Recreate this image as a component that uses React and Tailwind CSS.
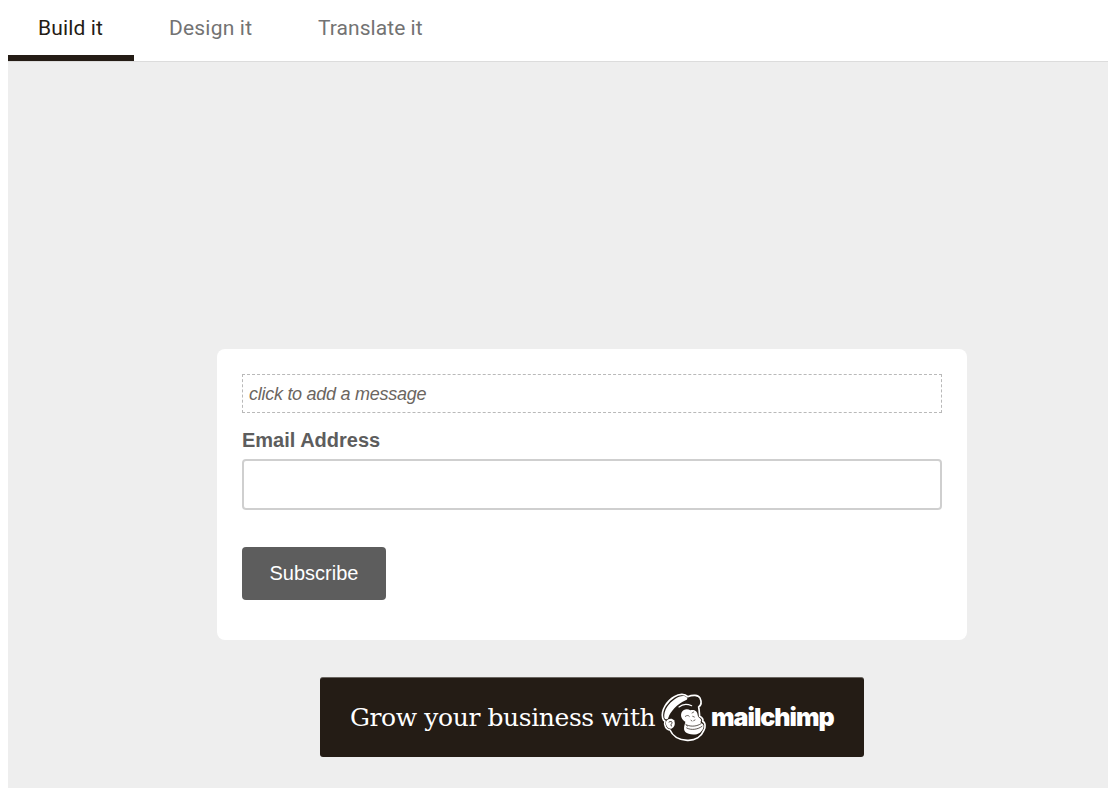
function ChimpLogo() {
  return (
    <svg className="ml-[5px] h-[51px] w-[47px] shrink-0" viewBox="0 0 141 153" fill="none" strokeLinecap="round" strokeLinejoin="round">
      <path
        d="M8 78C2 54 22 26 43 14C57 6 74 4 83 14C98 8 115 8 120 18C125 29 123 40 116 45C118 55 118 64 119 73C127 77 131 83 128 88C136 90 138 106 131 116C124 134 106 146 82 145C56 144 37 131 30 114C18 113 11 99 15 87C11 86 9 83 8 78Z"
        stroke="#fff"
        strokeWidth="5"
      />
      <path d="M13 77C10 55 27 33 45 21C57 12 73 9 80 16C84 20 82 23 77 25C62 32 52 39 43 49C34 59 28 68 25 77C23 84 15 83 13 77Z" fill="#fff" />
      <path d="M57 45C67 36 79 34 95 41" stroke="#fff" strokeWidth="3.5" />
      <path d="M19 87C25 79 37 78 42 85C47 94 44 107 34 110C21 111 15 97 19 87Z" fill="#fff" />
      <path d="M27 90C33 86 39 90 35 95L33 98L34 102" stroke="#241c15" strokeWidth="2.6" />
      <path
        d="M65 61C70 51 83 50 91 55C101 51 113 57 113 69C114 77 124 80 124 85C119 92 124 93 129 97C134 104 128 116 120 122C107 131 84 128 76 120C68 110 75 96 76 89C66 85 60 72 65 61Z"
        fill="#fff"
      />
      <path d="M76 73C81 69 86 70 88 73M98 73L103 75M96 63L101 60M93 85L96 87M101 86L105 84" stroke="#241c15" strokeWidth="2" />
      <path d="M80 99C94 105 112 103 123 95M80 108C94 116 115 112 126 103M77 97L82 102" stroke="#241c15" strokeWidth="2.2" />
    </svg>
  );
}

export default function App() {
  return (
    <div className="flex h-[788px] w-[1108px] flex-col overflow-hidden bg-white pl-2">
      <nav className="flex h-[62px] shrink-0 border-b border-[#dcdcdc] font-['Roboto',sans-serif] text-[21px] leading-[57px] whitespace-nowrap">
        <button className="h-[61px] w-[126px] border-b-6 border-[#241c15] pb-0 pl-[30px] text-left tracking-[0.15px] text-[#241c15]">Build it</button>
        <button className="h-[61px] w-[149px] border-b-6 border-transparent pl-[35px] text-left tracking-[0.2px] text-[#737373]">Design it</button>
        <button className="h-[61px] border-b-6 border-transparent pl-[35px] text-left tracking-[0.05px] text-[#737373]">Translate it</button>
      </nav>

      <main className="flex flex-1 flex-col bg-[#eeeeee] pt-[287px] pl-[209px] font-['Liberation_Sans',sans-serif]">
        <form className="h-[291px] w-[750px] shrink-0 rounded-lg bg-white px-[25px] pt-[25px]">
          <div className="flex h-[39px] items-center border border-dashed border-[#b9b9b9] pt-px pl-[6px] text-[18px] tracking-[-0.27px] text-[#6b6560] italic">
            click to add a message
          </div>
          <label htmlFor="email" className="mt-[14px] block text-[20px] leading-[26px] font-bold text-[#5d5d5d]">Email Address</label>
          <input id="email" type="email" className="mt-[6px] block h-[51px] w-full rounded-[4px] border-2 border-[#cfcfcf] bg-white px-3 outline-none" />
          <button type="button" className="mt-[37px] block h-[53px] w-[144px] rounded-[4px] bg-[#5d5d5d] pb-[2px] text-[20px] text-white">Subscribe</button>
        </form>

        <div className="mt-[37px] ml-[103px] flex h-[80px] w-[544px] items-center rounded-[3px] border-t border-[#6a6560] bg-[#241c15] pl-[30px] whitespace-nowrap text-white">
          <span className="w-[305px] font-['DejaVu_Serif',serif] text-[25px] tracking-[-0.4px]">Grow your business with</span>
          <ChimpLogo />
          <span className="ml-[4px] font-['Inter',sans-serif] text-[25px] font-black tracking-[-1px]">mailchimp</span>
        </div>
      </main>
    </div>
  );
}
